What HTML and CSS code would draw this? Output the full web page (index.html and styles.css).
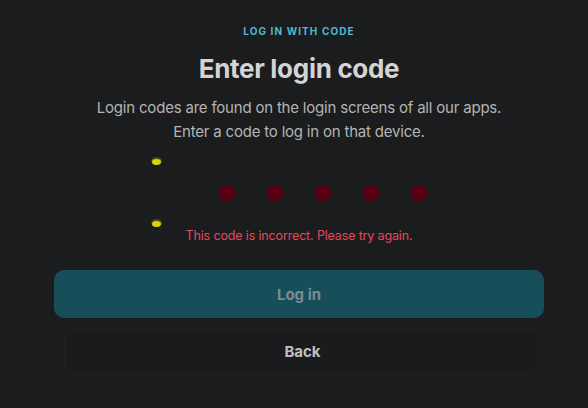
FILE: index.html
```html
<!DOCTYPE html>
<html lang="en">
<head>
  <meta charset="UTF-8">
  <meta name="viewport" content="width=device-width, initial-scale=1.0">
  <title>Enter login code</title>
  <link rel="stylesheet" href="styles.css">
</head>
<body>
  <div id="login">
    <div class="eyebrow">LOG IN WITH CODE</div>
    <h1 class="title">Enter login code</h1>
    <p class="lead">Login codes are found on the login screens of all our apps.<br>Enter a code to log in on that device.</p>

    <div class="code-area">
      <span class="marker marker-top"></span>
      <div class="code-dots">
        <span class="dot"></span>
        <span class="dot"></span>
        <span class="dot"></span>
        <span class="dot"></span>
        <span class="dot"></span>
      </div>
      <span class="marker marker-bottom"></span>
      <div class="error">This code is incorrect. Please try again.</div>
    </div>

    <div class="actions">
      <button class="btn btn-primary">Log in</button>
      <button class="btn btn-back">Back</button>
    </div>
  </div>
</body>
</html>
```

FILE: styles.css
```css
html, body {
  margin: 0;
  padding: 0;
  height: 100%;
  overflow: hidden;
}
body {
  background: #1b1c1e;
  font-family: Inter, "Liberation Sans", sans-serif;
  color: #b6b6b6;
  text-align: center;
}
#login {
  width: 490px;
  margin: 0 0 0 54px;
  padding-top: 25px;
}
.eyebrow {
  font-size: 10px;
  font-weight: bold;
  letter-spacing: 1.1px;
  color: #4fb9cf;
  line-height: 12px;
}
.title {
  margin: 15px 0 0;
  font-size: 26px;
  line-height: 34px;
  font-weight: bold;
  letter-spacing: -0.3px;
  color: #d4d4d4;
}
.lead {
  margin: 10px 0 0;
  font-size: 15px;
  line-height: 24px;
  letter-spacing: -0.2px;
  color: #b4b4b4;
}
.code-area {
  position: relative;
  height: 126px;
}
.code-dots {
  display: flex;
  justify-content: center;
  gap: 32px;
  padding: 41px 0 0 48px;
}
.dot {
  width: 16px;
  height: 16px;
  border-radius: 50%;
  background: #5b0012;
}
.marker {
  position: absolute;
  left: 98px;
  width: 9px;
  height: 6px;
  border-radius: 50%;
  background: #d8d410;
  box-shadow: 0 -1px 0 1px #4a4a16;
}
.marker-top {
  top: 15px;
}
.marker-bottom {
  top: 77px;
}
.error {
  margin-top: 27px;
  font-size: 12.5px;
  letter-spacing: -0.15px;
  color: #e24a5c;
}
.actions {
  display: flex;
  flex-direction: column;
  gap: 10px;
}
.btn {
  -webkit-appearance: none;
  appearance: none;
  font-family: inherit;
  font-size: 15px;
  font-weight: bold;
  height: 48px;
  border-radius: 10px;
  cursor: pointer;
}
.btn-primary {
  border: none;
  background: #164e59;
  color: #7a8c8f;
}
.btn-back {
  height: 46px;
  margin: 0 3px 0 10px;
  border: 1px solid #1e2022;
  border-radius: 6px;
  background: #1a1b1d;
  color: #c0c0c0;
}
```
